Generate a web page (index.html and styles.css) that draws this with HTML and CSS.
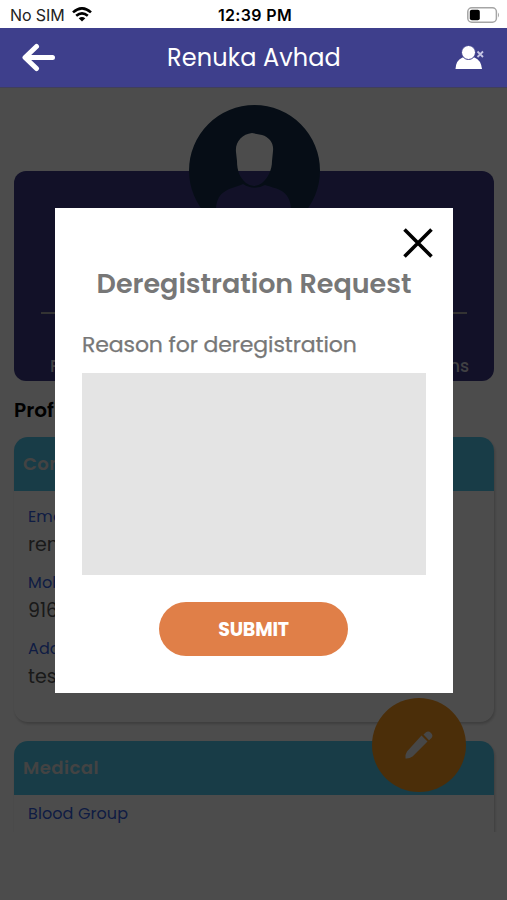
FILE: index.html
```html
<!DOCTYPE html>
<html lang="en">
<head>
<meta charset="utf-8">
<title>Renuka Avhad</title>
<link rel="stylesheet" href="styles.css">
</head>
<body>
<div class="status">
  <div class="carrier"><span>No SIM</span>
    <svg width="20" height="15" viewBox="0 0 20 15" fill="none" stroke="#000" stroke-width="2.6"><path d="M1 5.4Q10 -2.7 19 5.4M4.2 8.8Q10 3.8 15.8 8.8"/><path d="M6.7 11.2Q10 8.6 13.3 11.2L10 14.6Z" fill="#000" stroke="none"/></svg>
  </div>
  <span class="time">12:39 PM</span>
  <svg class="battery" width="33" height="16" viewBox="0 0 33 16"><rect x=".8" y=".8" width="28.6" height="14.4" rx="4" fill="none" stroke="#a5a5a5" stroke-width="1.5"/><rect x="2.8" y="2.8" width="10" height="10.4" rx="2"/><path d="M31 5.5Q33 8 31 10.5Z" fill="#a5a5a5"/></svg>
</div>
<header class="header">
  <svg width="34" height="30" viewBox="0 0 34 30" fill="none" stroke="#fff" stroke-width="5" stroke-linecap="round" stroke-linejoin="round"><path d="M14.500 3.500L3 14.500L14.500 25.500M4 14.500H30.500"/></svg>
  <h1 class="name">Renuka Avhad</h1>
  <svg width="30" height="25" viewBox="0 0 30 25" fill="#fff"><path d="M.5 24Q1 15 7.500 12.500L19.500 12.500Q26 15 27 24Z"/><circle cx="13.500" cy="7.500" r="7" stroke="#3e3f8c" stroke-width="1"/><path d="M22.500 6.500L28 12M28 6.500L22.500 12" stroke="#c5c5e4" stroke-width="1.800"/></svg>
</header>
<main class="screen">
  <div class="scroll">
    <section class="summary">
      <svg class="avatar" width="131" height="131" viewBox="0 0 131 131"><path fill="#142e4a" fill-rule="evenodd" d="M65.500 0A65.500 65.500 0 1 1 65.500 131A65.500 65.500 0 1 1 65.500 0ZM63 28C53 29 46 37 47 47L48 56C48 66 51 73 57 78Q65 84 73 78C79 73 83 65 83 56L84 46C85 38 80 32 73 30ZM54 79C43 84 28 84 27 104Q65 126 102 104C101 84 87 84 76 80Q65 86 54 79Z"/></svg>
      <div class="line"></div>
      <div class="stats"><span>Points</span><span>Sessions</span></div>
    </section>
    <h2 class="section-title">Profile</h2>
    <section class="card contact">
      <h3>Contact</h3>
      <dl>
        <dt>Email</dt><dd>ren</dd>
        <dt>Mobile</dt><dd>916</dd>
        <dt>Address</dt><dd>test</dd>
      </dl>
    </section>
    <section class="card">
      <h3>Medical</h3>
      <dl><dt>Blood Group</dt></dl>
    </section>
  </div>
  <div class="fab"><svg width="30" height="30" viewBox="0 0 30 30" fill="#eee"><path d="M1.500 28.500Q.8 25 3 21.500L17.500 5.500L23.500 11.500L8.500 26.500Q5 29 1.500 28.500ZM19.500 4.500L22 2.200Q24.500 .5 27 3Q29.500 5.500 27.500 8L25 10.200Z"/></svg></div>
  <div class="overlay">
    <div class="modal">
      <svg class="close" width="30" height="30" viewBox="0 0 30 30" stroke="#000" stroke-width="3.600"><path d="M1.500 1.500L28.500 28.500M28.500 1.500L1.500 28.500"/></svg>
      <h2>Deregistration Request</h2>
      <label for="reason">Reason for deregistration</label>
      <textarea id="reason"></textarea>
      <button>SUBMIT</button>
    </div>
  </div>
</main>
</body>
</html>
```

FILE: styles.css
```css
* { box-sizing: border-box; }
body { margin: 0; width: 507px; height: 900px; overflow: hidden; background: #fff; font-family: Poppins, Inter, "Liberation Sans", sans-serif; }
h1, h2, h3, dl, dd { margin: 0; }
svg { display: block; flex: none; }
.status { height: 28px; display: grid; grid-template-columns: 1fr auto 1fr; align-items: center; padding: 1px 7px 0 10px; font-family: Inter, sans-serif; font-size: 16px; color: #222; }
.carrier { display: flex; align-items: center; gap: 7px; letter-spacing: -.1px; }
.time { font-weight: 600; color: #000; letter-spacing: .35px; font-size: 16px; }
.battery { justify-self: end; }
.header { height: 60px; padding: 0 22px; display: flex; align-items: center; justify-content: space-between; background: #3e3f8c; border-bottom: 1px solid #403f5c; color: #fff; }
.name { margin-right: 3px; font-size: 24px; font-weight: 400; letter-spacing: .1px; }
.screen { position: relative; height: 812px; }
.scroll { height: 744px; padding: 83px 13px 0 14px; overflow: hidden; }
.summary { display: flow-root; height: 210px; padding: 0 27px; border-radius: 12px; background: #3c3b87; }
.avatar { margin: -66px auto 0; }
.line { height: 2px; margin-top: 76px; background: #aaa; }
.stats { display: flex; justify-content: space-between; margin: 42px -2px 0 9px; font-size: 17px; line-height: 20px; font-weight: 500; color: #d7d7df; }
.section-title { height: 56px; line-height: 58px; font-size: 20px; font-weight: 600; color: #000; }
.card { height: 285px; margin-bottom: 19px; border-radius: 14px; background: #fff; box-shadow: 1px 2px 3px #ccc; overflow: hidden; }
.card h3 { height: 54px; padding-left: 9px; line-height: 54px; font-size: 18px; font-weight: 600; letter-spacing: .5px; color: #e0e0e0; background: #50c8ed; }
.card dl { padding: 7px 14px; font-size: 16px; }
.card.contact dl { padding-top: 14px; }
.card dt { height: 25px; line-height: 24px; letter-spacing: .1px; color: #3560df; }
.card dd { height: 41px; line-height: 30px; font-size: 19px; color: #555; }
.fab { position: absolute; left: 372px; top: 610px; width: 94px; height: 94px; display: flex; align-items: center; justify-content: center; border-radius: 50%; background: #fa9a20; }
.overlay { position: absolute; inset: 0; padding: 120px 54px 0 55px; background: rgba(0, 0, 0, .7); }
.modal { height: 485px; padding: 20px 27px 0; display: flex; flex-direction: column; align-items: flex-start; background: #fff; color: #777; }
.close { align-self: flex-end; margin-right: -7px; }
.modal h2 { width: 100%; height: 50px; line-height: 52px; text-align: center; font-size: 27px; font-weight: 600; letter-spacing: -.02px; white-space: nowrap; }
.modal label { height: 65px; line-height: 74px; font-size: 22px; font-weight: 400; letter-spacing: -.12px; -webkit-text-stroke: .25px #777; }
.modal textarea { width: 344px; height: 202px; border: 0; border-radius: 0; resize: none; background: #e4e4e4; }
.modal button { width: 189px; height: 54px; margin: 27px 1px 0 0; align-self: center; border: 0; border-radius: 27px; background: #e07f48; color: #fff; font: 700 19px/24px Poppins, "Open Sans", sans-serif; letter-spacing: -.2px; padding: 1px 0 0; }
```
